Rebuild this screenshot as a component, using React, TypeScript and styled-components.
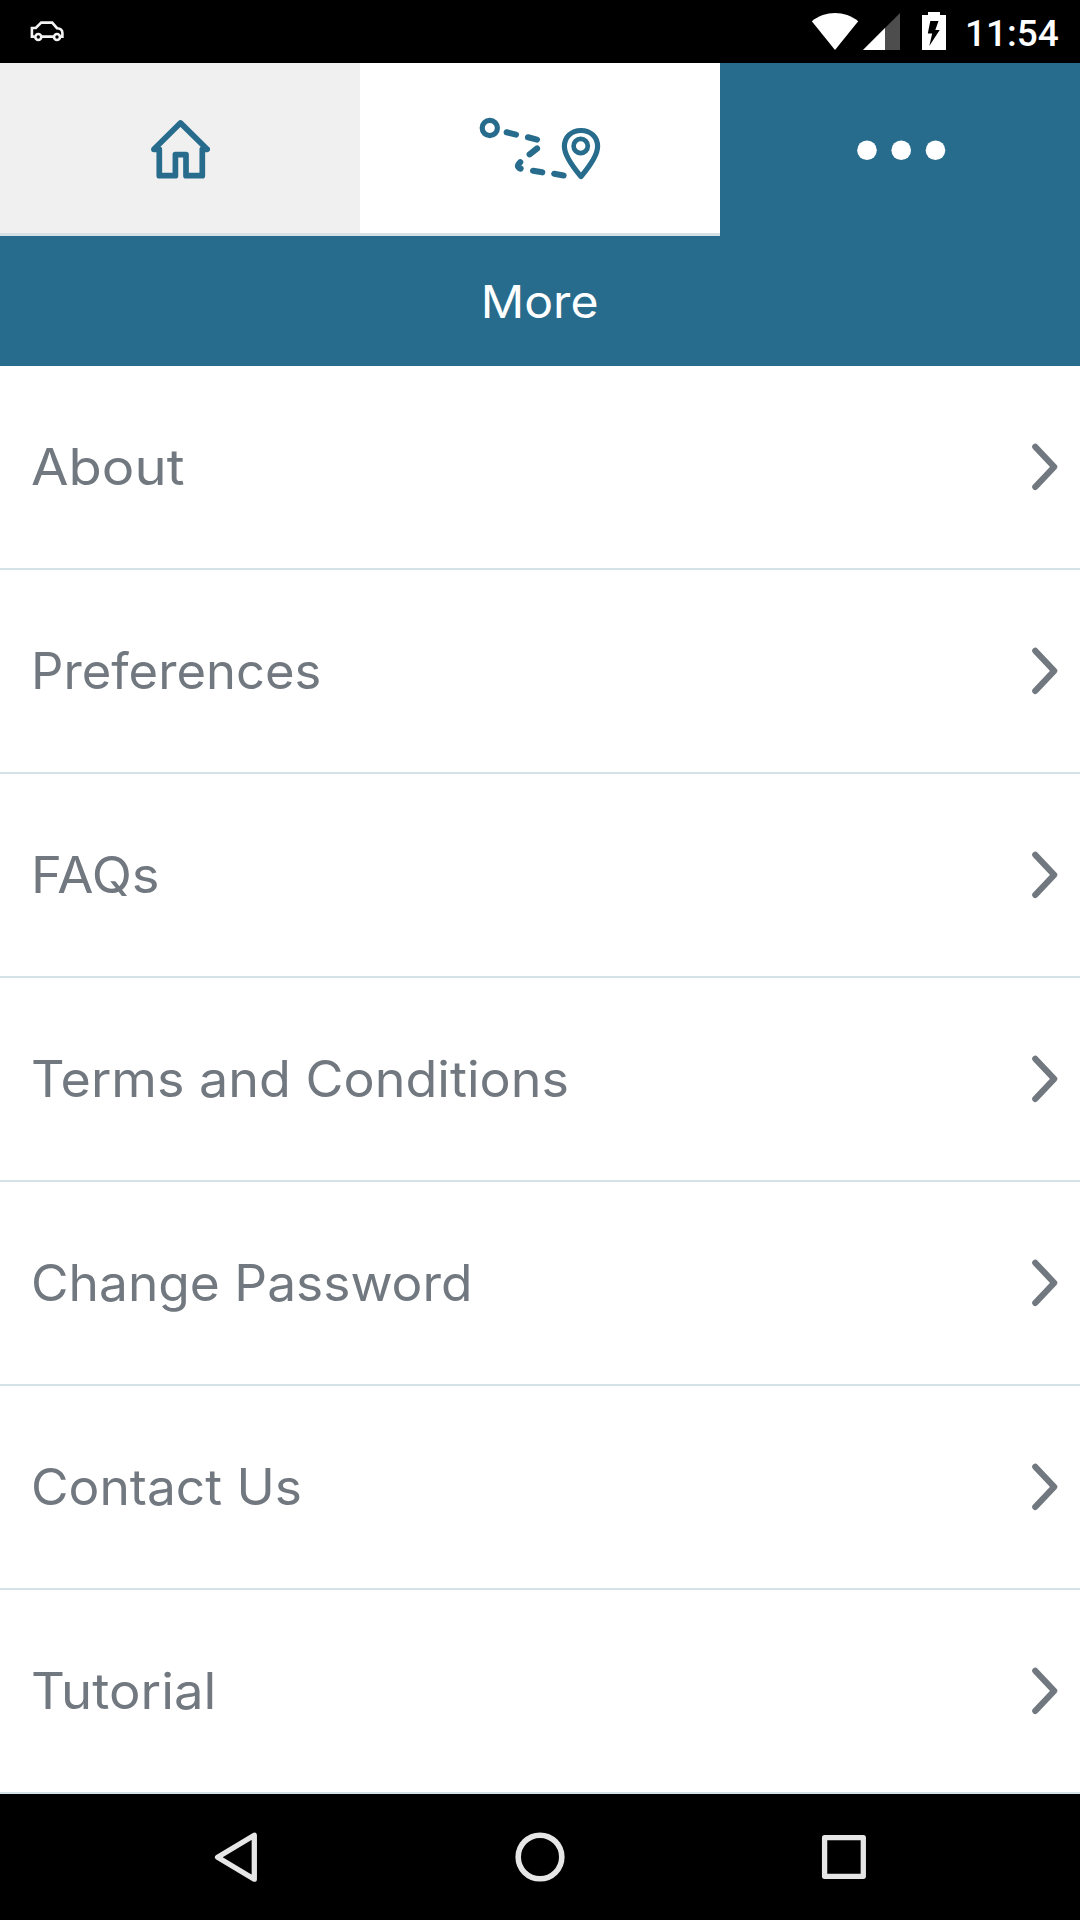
import React from "react";
import styled, { createGlobalStyle } from "styled-components";

const BLUE = "#276c8d";
const GREY = "#72787f";
const RULE = "#d4e1e7";

const GlobalStyle = createGlobalStyle`
  *, *::before, *::after { box-sizing: border-box; }
  body { margin: 0; background: #000; }
`;

const Screen = styled.div`
  display: flex;
  flex-direction: column;
  width: 1080px;
  height: 1920px;
  background: #fff;
  overflow: hidden;
  font-family: Inter, "Open Sans", sans-serif;

  svg {
    display: block;
    flex: none;
  }
`;

const StatusBar = styled.header`
  display: flex;
  justify-content: space-between;
  height: 63px;
  padding: 0 22px 0 26px;
  background: #000;
`;

const StatusGroup = styled.div`
  display: flex;
`;

const Clock = styled.time`
  width: 108px;
  padding: 2px 0 0 15px;
  color: #fff;
  font: 500 37px/63px Roboto, sans-serif;
  white-space: nowrap;
`;

const Tabs = styled.nav`
  display: grid;
  grid-template-columns: repeat(3, 1fr);
  height: 173px;
`;

const Tab = styled.button<{ $background: string; $underlined?: boolean }>`
  display: flex;
  align-items: center;
  justify-content: center;
  padding: 0;
  border: 0;
  background: ${(p) => p.$background};
  box-shadow: ${(p) => (p.$underlined ? "inset 0 -3px 0 #d5e1e5" : "none")};
`;

const TitleBar = styled.h1`
  display: flex;
  justify-content: center;
  height: 130px;
  margin: 0;
  padding-top: 1px;
  background: ${BLUE};
  color: #fff;
  font-size: 45.5px;
  font-weight: 400;
  line-height: 130px;
`;

const Menu = styled.ul`
  flex: 1;
  margin: 0;
  padding: 0;
  list-style: none;
`;

const MenuRow = styled.li`
  display: flex;
  align-items: center;
  justify-content: space-between;
  height: 204px;
  padding: 0 22px 0 31px;
  border-bottom: 2px solid ${RULE};
`;

const Wide = styled.span<{ $stretch: number }>`
  display: block;
  transform: scaleX(${(p) => p.$stretch});
  white-space: nowrap;
`;

const Label = styled(Wide)`
  transform-origin: left center;
  color: ${GREY};
  font-size: 50px;
  line-height: 60px;
`;

const NavBar = styled.footer`
  display: grid;
  grid-template-columns: repeat(3, 304px);
  justify-content: center;
  place-items: center;
  height: 126px;
  background: #000;
`;

const menuItems = [
  { label: "About", stretch: 1.088 },
  { label: "Preferences", stretch: 1.015 },
  { label: "FAQs", stretch: 1.05 },
  { label: "Terms and Conditions", stretch: 1.041 },
  { label: "Change Password", stretch: 1.029 },
  { label: "Contact Us", stretch: 1.029 },
  { label: "Tutorial", stretch: 1.053 },
];

const CarIcon = () => (
  <svg width="44" height="63" viewBox="26 0 44 63" fill="none" stroke="#f4f4f4" strokeWidth="2.6">
    <path d="M34.5 36.6H31.9V28H35.8L41.2 22.6H52.2L57 28.2C60.5 28.4 62.4 30.5 62.4 33V36.6H61M42 36.6H53.5" />
    <circle cx="38.3" cy="37" r="3" />
    <circle cx="57" cy="37" r="3" />
  </svg>
);

const WifiIcon = () => (
  <svg width="48" height="63" viewBox="811 0 48 63">
    <path d="M835 50L811.8 21.3C825 10.3 845 10.3 858.2 21.3Z" fill="#fff" />
  </svg>
);

const SignalIcon = () => (
  <svg width="41" height="63" viewBox="859 0 41 63">
    <path d="M863 50L900 13V50Z" fill="#4d4d4d" />
    <path d="M863 50L885 28V50Z" fill="#fff" />
  </svg>
);

const BatteryIcon = () => (
  <svg width="50" height="63" viewBox="900 0 50 63">
    <path d="M922 15H928V12H940V15H946V50H922Z" fill="#fff" />
    <path d="M930.3 21H938.5L935.3 30H939.7L929.3 46L932.2 33.5H927.8Z" fill="#000" />
  </svg>
);

const HomeIcon = () => (
  <svg width="60" height="61" viewBox="150 119 60 61" fill="none" stroke={BLUE} strokeWidth="5.7" strokeLinecap="round" strokeLinejoin="round">
    <path d="M159.3 149.3H153.9L180.4 122.9L207.2 149.3H202.3V175.7H186V154.6H175.4V175.7H159.3Z" />
  </svg>
);

const RouteIcon = () => (
  <svg width="128" height="77" viewBox="476 111 128 77" fill="none" stroke={BLUE} strokeWidth="6.1" strokeLinecap="round" strokeLinejoin="round">
    <circle cx="489.8" cy="128" r="7.6" strokeWidth="5.2" />
    <path d="M506.7 132.3L516 134.6M528 137.3L537 139.6M537 148.5L529.6 154.3M520.2 162.2C517.2 165 517 167 520.6 168.6M533 170.8L542.3 172.3M554.2 173.8L563.6 175.4" />
    <path d="M581 176.6C576 170.5 564.4 157 564.4 146.5C564.4 137 571.5 130.5 581 130.5C590.5 130.5 597.6 137 597.6 146.5C597.6 157 586 170.5 581 176.6Z" strokeWidth="5.2" />
    <circle cx="580.7" cy="146" r="7.1" strokeWidth="4.7" />
  </svg>
);

const MoreIcon = () => (
  <svg width="94" height="25" viewBox="853 137 94 25" fill="#fff">
    <circle cx="867" cy="150.2" r="9.8" />
    <circle cx="901.2" cy="150.2" r="9.8" />
    <circle cx="935.5" cy="150.2" r="9.8" />
  </svg>
);

const Chevron = () => (
  <svg width="28" height="50" viewBox="1030 442 28 50" fill="none" stroke={GREY} strokeWidth="6.2" strokeLinecap="round" strokeLinejoin="round">
    <path d="M1035.3 446.8L1054.2 466.8L1035.3 486.9" />
  </svg>
);

const NavIcon = ({ children }: { children: React.ReactNode }) => (
  <svg width="60" height="60" viewBox="0 0 60 60" fill="none" stroke="#e6e6e6" strokeWidth="5.3" strokeLinejoin="round">
    {children}
  </svg>
);

export default function App() {
  return (
    <>
      <GlobalStyle />
      <Screen>
        <StatusBar>
          <StatusGroup>
            <CarIcon />
          </StatusGroup>
          <StatusGroup>
            <WifiIcon />
            <SignalIcon />
            <BatteryIcon />
            <Clock>11:54</Clock>
          </StatusGroup>
        </StatusBar>
        <Tabs>
          <Tab $background="#f0f0f0" $underlined aria-label="Home">
            <HomeIcon />
          </Tab>
          <Tab $background="#fff" $underlined aria-label="Trips">
            <RouteIcon />
          </Tab>
          <Tab $background={BLUE} aria-label="More">
            <MoreIcon />
          </Tab>
        </Tabs>
        <TitleBar>
          <Wide $stretch={1.058}>More</Wide>
        </TitleBar>
        <Menu>
          {menuItems.map(({ label, stretch }) => (
            <MenuRow key={label}>
              <Label $stretch={stretch}>{label}</Label>
              <Chevron />
            </MenuRow>
          ))}
        </Menu>
        <NavBar>
          <NavIcon>
            <path d="M11.6 30.2L48.3 8.2V52.2Z" />
          </NavIcon>
          <NavIcon>
            <circle cx="30" cy="30" r="21.8" strokeWidth="5.6" />
          </NavIcon>
          <NavIcon>
            <rect x="10.6" y="10.6" width="38.7" height="38.7" />
          </NavIcon>
        </NavBar>
      </Screen>
    </>
  );
}
